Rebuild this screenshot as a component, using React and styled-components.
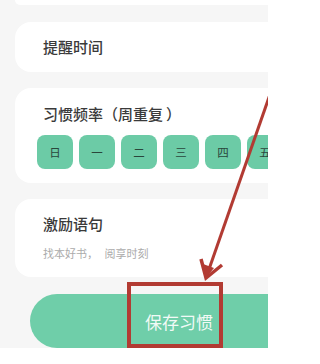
import React from 'react';
import styled, { createGlobalStyle } from 'styled-components';

const GlobalStyle = createGlobalStyle`
  body {
    margin: 0;
    background: #ffffff;
    font-family: "Noto Sans CJK SC", "Noto Sans", sans-serif;
  }
`;

const Viewport = styled.div`
  position: relative;
  width: 268px;
  height: 348px;
  overflow: hidden;
  background: #f6f6f6;
`;

const Page = styled.div`
  width: 358px;
  display: flex;
  flex-direction: column;
  gap: 16px;
`;

const Card = styled.div`
  margin: 0 15px;
  background: #ffffff;
  border-radius: 16px;
  display: flex;
  flex-direction: column;
  padding: ${p => p.$pad || '0 28px'};
  height: ${p => (p.$h ? `${p.$h}px` : 'auto')};
  justify-content: ${p => (p.$center ? 'center' : 'flex-start')};
  box-sizing: border-box;
`;

const CutCard = styled(Card)`
  height: 5px;
  border-radius: 0 0 16px 16px;
  margin-bottom: 1px;
`;

const Title = styled.div`
  font-size: 15px;
  line-height: 20px;
  font-weight: 500;
  color: #3a3a3a;
  white-space: pre;
  margin-left: ${p => p.$indent || 0}px;
`;

// full-width bracket box, the glyph sits on the inner side
const Paren = styled.span`
  display: inline-block;
  width: 1em;
  text-align: ${p => (p.$open ? 'right' : 'left')};
  padding: ${p => (p.$open ? '0 3px 0 0' : '0 0 0 3px')};
  box-sizing: border-box;
`;

const Hint = styled.div`
  margin-top: 11px;
  font-size: 11px;
  line-height: 16px;
  color: #ababab;
  white-space: pre;
  word-spacing: 4px;
`;

const DayRow = styled.div`
  display: flex;
  gap: 6px;
  margin-top: 11px;
`;

const Day = styled.div`
  flex: 0 0 36px;
  height: 34px;
  border-radius: 8px;
  background: #6ccba6;
  color: #2a463b;
  font-size: 11.5px;
  display: flex;
  align-items: center;
  justify-content: center;
`;

const SaveButton = styled.div`
  margin: 1px 30px 0;
  height: 54px;
  border-radius: 27px;
  background: #6fcea9;
  color: rgba(255, 255, 255, 0.92);
  font-size: 17px;
  display: flex;
  align-items: center;
  justify-content: center;
`;

const Overlay = styled.svg`
  position: absolute;
  left: 0;
  top: 0;
  pointer-events: none;
`;

const days = ['日', '一', '二', '三', '四', '五', '六'];

export default function App() {
  return (
    <>
      <GlobalStyle />
      <Viewport>
        <Page>
          <CutCard />
          <Card $h={50} $center>
            <Title>提醒时间</Title>
          </Card>
          <Card $pad="16px 22px 14px">
            <Title $indent={6}>
              习惯频率<Paren $open>（</Paren>周重复<Paren>）</Paren>
            </Title>
            <DayRow>
              {days.map(d => (
                <Day key={d}>{d}</Day>
              ))}
            </DayRow>
          </Card>
          <Card $pad="15px 28px 16px">
            <Title>激励语句</Title>
            <Hint>找本好书， 阅享时刻</Hint>
          </Card>
          <SaveButton>保存习惯</SaveButton>
        </Page>
        <Overlay width="268" height="348" viewBox="0 0 268 348">
          <line x1="282" y1="60" x2="207" y2="275" stroke="#b23b33" strokeWidth="3" />
          <polyline points="201,259 206,278 222,265" fill="none" stroke="#b23b33" strokeWidth="3.5" strokeLinejoin="miter" />
          <polygon points="203,264 206,278 214,268" fill="#b23b33" />
          <rect x="129" y="284" width="92" height="62" fill="none" stroke="#b23b33" strokeWidth="4" />
        </Overlay>
      </Viewport>
    </>
  );
}
